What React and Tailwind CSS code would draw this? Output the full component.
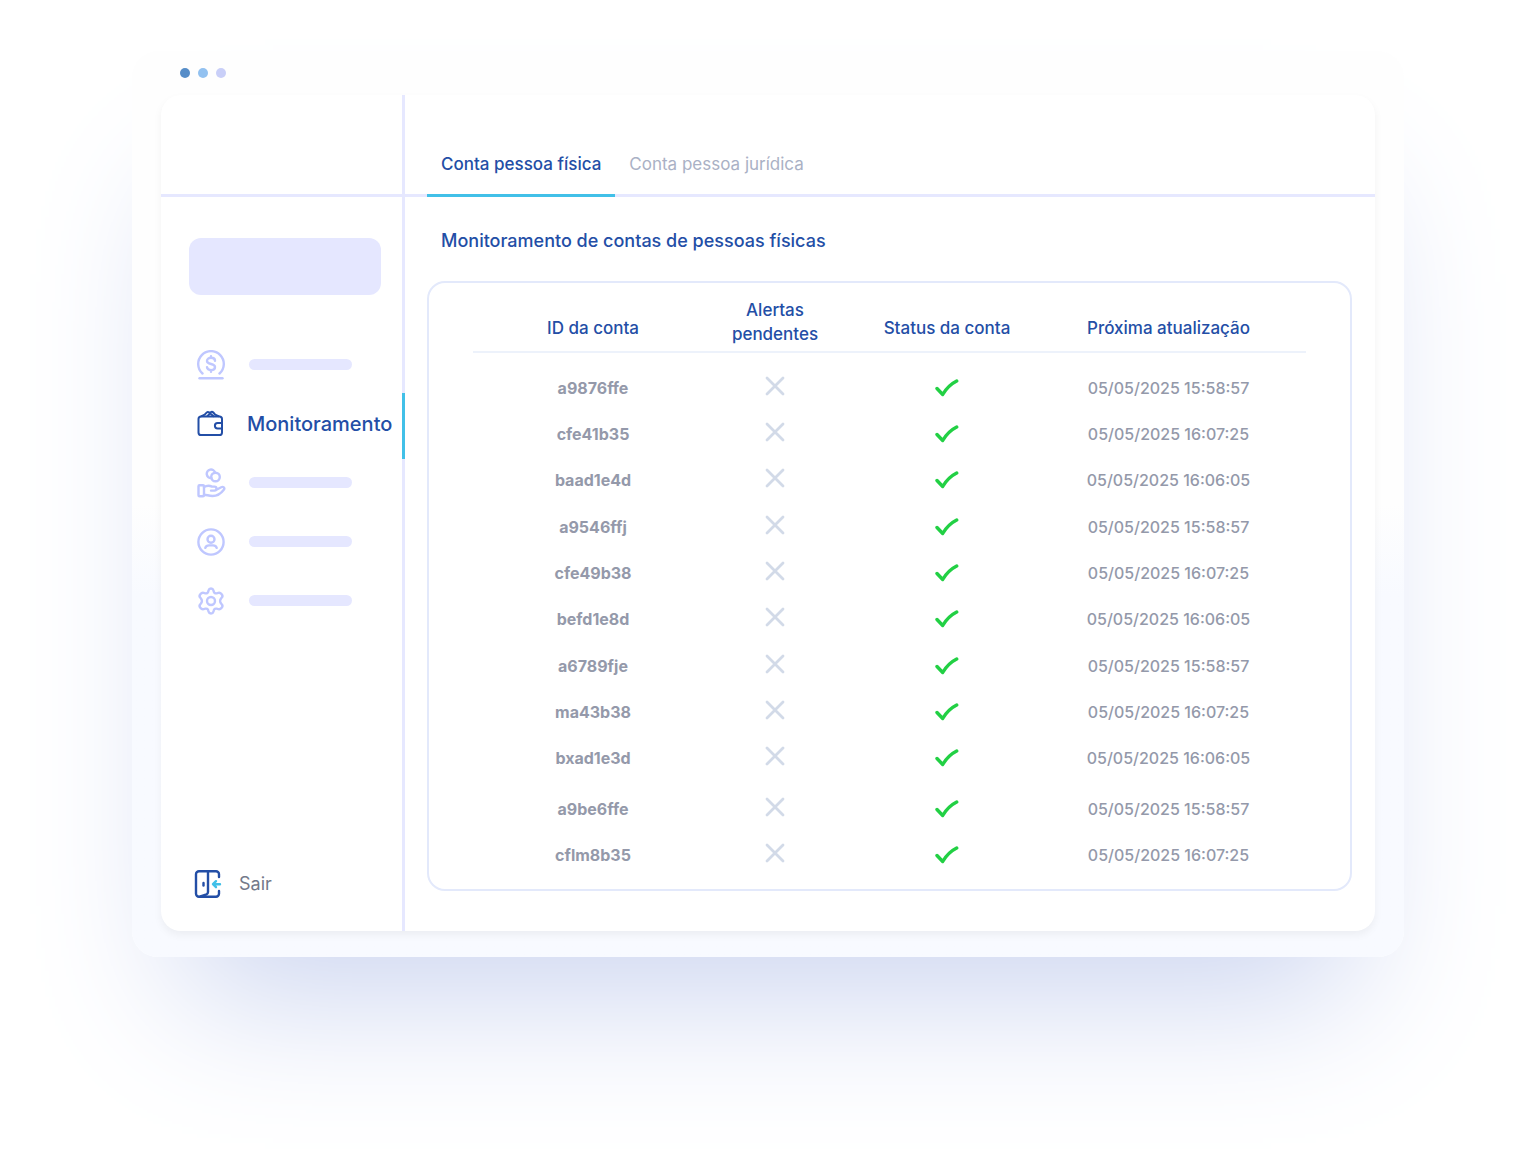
import { clsx } from 'clsx'

const menu = [
    { id: 'saldo', title: 'Saldo', icon: CoinIcon },
    { id: 'monitoramento', title: 'Monitoramento', icon: WalletIcon, active: true },
    { id: 'pagamentos', title: 'Pagamentos', icon: HandIcon },
    { id: 'perfil', title: 'Perfil', icon: UserIcon },
    { id: 'ajustes', title: 'Ajustes', icon: GearIcon },
]

const groups = [
    [
        { id: 'a9876ffe', next: '05/05/2025 15:58:57' },
        { id: 'cfe41b35', next: '05/05/2025 16:07:25' },
        { id: 'baad1e4d', next: '05/05/2025 16:06:05' },
    ],
    [
        { id: 'a9546ffj', next: '05/05/2025 15:58:57' },
        { id: 'cfe49b38', next: '05/05/2025 16:07:25' },
        { id: 'befd1e8d', next: '05/05/2025 16:06:05' },
    ],
    [
        { id: 'a6789fje', next: '05/05/2025 15:58:57' },
        { id: 'ma43b38', next: '05/05/2025 16:07:25' },
        { id: 'bxad1e3d', next: '05/05/2025 16:06:05' },
    ],
    [
        { id: 'a9be6ffe', next: '05/05/2025 15:58:57' },
        { id: 'cflm8b35', next: '05/05/2025 16:07:25' },
    ],
]

const rowGrid = 'grid grid-cols-[240fr_124fr_220fr_223fr] pr-[26px] text-center'

function CoinIcon() {
    return (
        <svg width="30" height="30" viewBox="0 0 30 30" fill="none" stroke="currentColor" strokeWidth="2.4" strokeLinecap="round" strokeLinejoin="round">
            <path d="M6.5 23.5A12.8 12.8 0 1 1 23.5 23.5" />
            <path d="M3.5 28.2h23" />
            <path d="M19 10.8c0-1.9-1.8-3-4-3s-4 1.1-4 3.1c0 4.2 8 2 8 6.1 0 2-1.8 3.1-4 3.1s-4-1.1-4-3M15 7.5V6.2M15 20.3v1.4" />
        </svg>
    )
}

function WalletIcon() {
    return (
        <svg width="30" height="30" viewBox="0 0 30 30" fill="none" stroke="currentColor" strokeWidth="2" strokeLinecap="round" strokeLinejoin="round">
            <rect x="2.5" y="7.5" width="23.5" height="18.5" rx="2.6" />
            <path d="M26 14h-4.4a2.7 2.7 0 0 0 0 5.4H26" />
            <path d="M5.5 7.2l3.2-1.500 1.900-2.100a2 2 0 0 1 2.600-.2L17.500 7.200M13.800 4l.9-.7a2 2 0 0 1 2.600.2l1.900 2.200 3.300 1.500M11.500 7l1.800-1.700" />
        </svg>
    )
}

function HandIcon() {
    return (
        <svg width="30" height="30" viewBox="0 0 30 30" fill="none" stroke="currentColor" strokeWidth="2.4" strokeLinecap="round" strokeLinejoin="round">
            <circle cx="19.5" cy="9" r="4.3" />
            <path d="M15.5 10.100a4.300 4.300 0 1 1 3.700-5.400" />
            <rect x="2.500" y="17.300" width="5.500" height="11" rx="1" />
            <path d="M8 19c3-1.800 5.500-1.700 8-.4h2.500c2.600 0 2.600 4 0 4H15M20 22l5.200-2.800c2-1 4 .8 2.600 2.500-3 4-7 6.300-11.300 6.300-4 0-5.500-1.300-8.500-1.300" />
        </svg>
    )
}

function UserIcon() {
    return (
        <svg width="30" height="30" viewBox="0 0 30 30" fill="none" stroke="currentColor" strokeWidth="2.4" strokeLinecap="round" strokeLinejoin="round">
            <circle cx="15" cy="15" r="12.6" />
            <circle cx="15" cy="12.3" r="3.5" />
            <path d="M9.3 20.8c.6-1.700 2-2.400 3.700-2.400h4c1.700 0 3.100.7 3.700 2.400" />
        </svg>
    )
}

function GearIcon() {
    return (
        <svg width="30" height="30" viewBox="0 0 30 30" fill="none" stroke="currentColor" strokeWidth="2.4" strokeLinecap="round" strokeLinejoin="round">
            <circle cx="15" cy="15" r="4" />
            <path d="M12.6 4.2C13.2 1.9 16.8 1.9 17.4 4.2L17.8 5.7C18.1 7 19.4 7.6 20.6 7.3L22.3 6.9C24.8 6.3 27.6 9.6 25.9 11.4L25 12.600C23.800 13.900 23.800 16.100 25 17.400L25.900 18.600C27.600 20.400 24.800 23.700 22.300 23.100L20.600 22.700C19.400 22.400 18.100 23 17.800 24.300L17.400 25.800C16.800 28.100 13.200 28.100 12.600 25.800L12.200 24.300C11.900 23 10.600 22.400 9.400 22.700L7.700 23.100C5.200 23.700 2.400 20.400 4.100 18.600L5 17.400C6.200 16.100 6.200 13.900 5 12.600L4.100 11.400C2.400 9.600 5.200 6.300 7.700 6.900L9.400 7.300C10.600 7.600 11.900 7 12.200 5.700Z" />
        </svg>
    )
}

function ExitIcon() {
    return (
        <svg width="28" height="30" viewBox="0 0 28 30" fill="none" stroke="currentColor" strokeWidth="2.4" strokeLinecap="round" strokeLinejoin="round">
            <path d="M25 8V5.2A3 3 0 0 0 22 2.2H5a3 3 0 0 0-3 3v19.6a3 3 0 0 0 3 3h17a3 3 0 0 0 3-3V22" />
            <path d="M14 2.5v20.5a2.5 2.5 0 0 1-1.5 2.3L6.500 27.500" />
            <path d="M9.500 14v2.500" />
            <path stroke="#41c0e8" d="M26 15.200h-6.500M22 12.200l-3 3 3 3" />
        </svg>
    )
}

function CrossIcon() {
    return (
        <svg width="20" height="20" viewBox="0 0 20 20" fill="none" stroke="#d2dae8" strokeWidth="2.8" strokeLinecap="round" role="img" aria-label="Nenhum">
            <path d="M2 2l16 16M18 2L2 18" />
        </svg>
    )
}

function CheckIcon() {
    return (
        <svg width="24" height="18" viewBox="0 0 24 18" fill="none" stroke="#22d044" strokeWidth="3.4" strokeLinecap="round" strokeLinejoin="round" role="img" aria-label="Ativa">
            <path d="M2 9.5L7.700 15.500C11.200 9.500 15.700 5 21.700 2" />
        </svg>
    )
}

const Sidebar = () => (
    <aside className="flex w-[244px] shrink-0 flex-col border-r-[3px] border-[#e6e8ff]">
        <div className="h-[102px] border-b-[3px] border-[#e6e8ff]" />
        <div className="mt-[41px] mr-[21px] ml-7 h-[57px] rounded-xl bg-[#e5e7ff]" />

        <nav className="mt-10 flex flex-col">
            {menu.map(({ id, title, icon: Icon, active }) => (
                <a
                    key={id}
                    href={`#${id}`}
                    aria-label={title}
                    className={clsx('relative flex h-[59px] items-center pl-[35px]', active ? 'text-[#234ea6]' : 'text-[#bfc7ff]')}
                >
                    <Icon />
                    {active ? (
                        <>
                            <span className="ml-[21px] text-xl font-medium">{title}</span>
                            <span className="absolute -top-px -right-[3px] h-[66px] w-[3px] bg-[#41c0e8]" />
                        </>
                    ) : (
                        <span className="ml-[23px] h-[11px] w-[103px] rounded-full bg-[#e5e7ff]" />
                    )}
                </a>
            ))}
        </nav>

        <button type="button" className="mt-auto mb-8 ml-[33px] flex items-center gap-[17px] text-[#234ea6]">
            <ExitIcon />
            <span className="text-lg text-[#73798a]">Sair</span>
        </button>
    </aside>
)

const Tabs = () => (
    <div role="tablist" className="flex h-[102px] items-end border-b-[3px] border-[#e6e8ff] pl-[22px] text-[17px] leading-7">
        <button type="button" role="tab" aria-selected="true" className="-mb-[3px] border-b-[3px] border-[#41c0e8] px-[14px] pb-4 font-medium text-[#234ea6]">
            Conta pessoa física
        </button>
        <button type="button" role="tab" aria-selected="false" className="px-[14px] pb-4 text-[#aab1c5]">
            Conta pessoa jurídica
        </button>
    </div>
)

const AccountsTable = () => (
    <div className="mr-[23px] ml-[22px] mt-[26px] rounded-[18px] border-2 border-[#e3e9fb] px-[44px] pt-[15px] pb-[11px]">
        <table className="flex flex-col leading-6">
            <thead className="block border-b-2 border-[#edf2fb] pb-[5px] text-[17px] text-[#234ea6]">
                <tr className={clsx(rowGrid, 'items-end')}>
                    <th className="pb-1.5 font-medium">ID da conta</th>
                    <th className="font-medium">Alertas pendentes</th>
                    <th className="pb-1.5 font-medium">Status da conta</th>
                    <th className="pb-1.5 font-medium">Próxima atualização</th>
                </tr>
            </thead>
            {groups.map((rows, i) => (
                <tbody key={i} className="mt-px flex flex-col first-of-type:mt-3 last:mt-[5px]">
                    {rows.map((row) => (
                        <tr key={row.id} className={clsx(rowGrid, 'h-[46px] items-center text-base text-[#9499aa]')}>
                            <td className="font-bold">{row.id}</td>
                            <td className="flex justify-center pb-1">
                                <CrossIcon />
                            </td>
                            <td className="flex justify-center">
                                <CheckIcon />
                            </td>
                            <td className="font-medium">{row.next}</td>
                        </tr>
                    ))}
                </tbody>
            ))}
        </table>
    </div>
)

const App = () => {
    return (
        <div className="min-h-screen bg-white px-[132px] pt-[51px] pb-[215px] font-['Inter',sans-serif]">
            <div className="rounded-[26px] bg-linear-to-b from-[#fefefe] from-50% to-[#f8faff] to-60% px-[29px] pb-[26px] shadow-[0_90px_140px_-50px_#ccd5f0]">
                <div className="flex h-11 items-center gap-2 pl-[19px]">
                    <span className="size-[10px] rounded-full bg-[#568dc8]" />
                    <span className="size-[10px] rounded-full bg-[#92c1f0]" />
                    <span className="size-[10px] rounded-full bg-[#c9cff8]" />
                </div>

                <div className="flex min-h-[836px] rounded-[20px] bg-white shadow-[0_4px_8px_#0000000d]">
                    <Sidebar />
                    <main className="min-w-0 flex-1">
                        <Tabs />
                        <h1 className="mt-[30px] pl-9 text-lg font-medium text-[#234ea6]">
                            Monitoramento de contas de pessoas físicas
                        </h1>
                        <AccountsTable />
                    </main>
                </div>
            </div>
        </div>
    )
}

export default App
